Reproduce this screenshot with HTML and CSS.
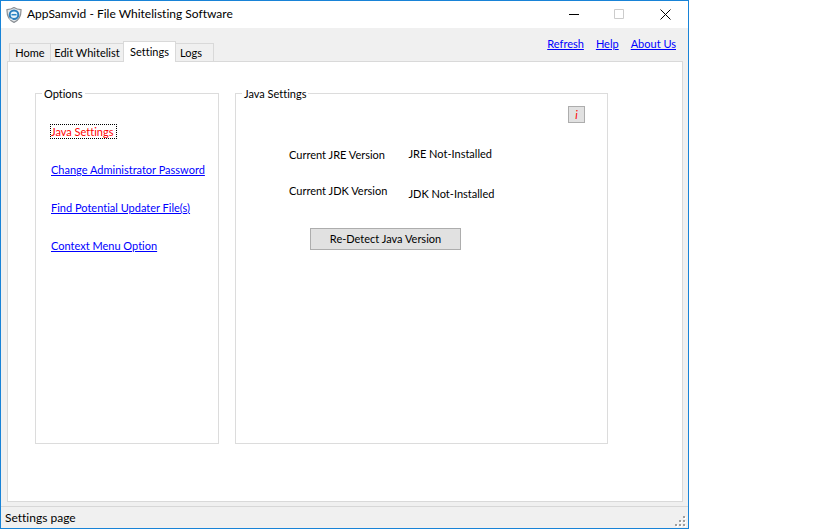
FILE: index.html
```html
<!DOCTYPE html>
<html lang="en">
<head>
<meta charset="utf-8">
<title>AppSamvid - File Whitelisting Software</title>
<link rel="stylesheet" href="styles.css">
</head>
<body>
<div class="window">
  <header class="titlebar">
    <svg class="logo" viewBox="0 0 16 16" aria-hidden="true">
      <path d="M8 .6 C6 2 3.5 2.6 1 2.6 C.8 8 2 12.800 8 15.400 C14 12.800 15.200 8 15 2.600 C12.500 2.600 10 2 8 .6Z" fill="#e4e8eb" stroke="#8b9095" stroke-width="1.200"/>
      <circle cx="8" cy="7.700" r="4.300" fill="#e9f5fb" stroke="#2a7fbd" stroke-width="2"/>
      <path d="M5.500 7.700h5" stroke="#2585c7" stroke-width="1.500"/>
      <path d="M3.500 12l3 .3M12.500 3.500l1 1" stroke="#fff" stroke-width="1"/>
    </svg>
    <h1 class="title">AppSamvid - File Whitelisting Software</h1>
    <div class="controls">
      <button class="control" type="button" aria-label="Minimize"><svg viewBox="0 0 11 11"><path d="M1 5.500h10" stroke="#000"/></svg></button>
      <button class="control" type="button" aria-label="Maximize" disabled><svg viewBox="0 0 11 11"><path d="M.5 .5h9v9h-9z" fill="none" stroke="#ccc"/></svg></button>
      <button class="control" type="button" aria-label="Close"><svg viewBox="0 0 11 11"><path d="M.5 .5l10 10M10.500 .5l-10 10" stroke="#000"/></svg></button>
    </div>
  </header>
  <div class="toolbar">
    <div class="tabs" role="tablist">
      <button class="tab" type="button" role="tab">Home</button>
      <button class="tab" type="button" role="tab">Edit Whitelist</button>
      <button class="tab active" type="button" role="tab" aria-selected="true">Settings</button>
      <button class="tab last" type="button" role="tab">Logs</button>
    </div>
    <nav class="links">
      <a href="#refresh">Refresh</a>
      <a href="#help">Help</a>
      <a href="#about">About Us</a>
    </nav>
  </div>
  <main class="page">
    <fieldset class="group options">
      <legend>Options</legend>
      <a class="current" href="#java">Java Settings</a>
      <a href="#password">Change Administrator Password</a>
      <a href="#updater">Find Potential Updater File(s)</a>
      <a href="#context">Context Menu Option</a>
    </fieldset>
    <fieldset class="group java">
      <legend>Java Settings</legend>
      <button class="info" type="button">i</button>
      <div class="versions">
        <div class="names">
          <span>Current JRE Version</span>
          <span>Current JDK Version</span>
        </div>
        <div class="values">
          <span>JRE Not-Installed</span>
          <span>JDK Not-Installed</span>
        </div>
      </div>
      <button class="detect" type="button">Re-Detect Java Version</button>
    </fieldset>
  </main>
  <footer class="status">
    <span>Settings page</span>
    <svg class="grip" viewBox="0 0 12 12" aria-hidden="true">
      <path d="M9 1h2v2h-2zM5 5h2v2h-2zM9 5h2v2h-2zM1 9h2v2h-2zM5 9h2v2h-2zM9 9h2v2h-2z" fill="#fff"/>
      <path d="M8 0h2v2h-2zM4 4h2v2h-2zM8 4h2v2h-2zM0 8h2v2h-2zM4 8h2v2h-2zM8 8h2v2h-2z" fill="#9e9e9e"/>
    </svg>
  </footer>
</div>
</body>
</html>
```
FILE: styles.css
```css
* { box-sizing: border-box; }

body {
  margin: 0;
  padding-right: 130px;
  background: #fff;
  color: #000;
  font: 11px/13px Lato, Arial, sans-serif;
  font-variant-ligatures: none;
}

button {
  margin: 0;
  padding: 0;
  color: inherit;
  font: inherit;
  font-variant-ligatures: none;
}

a { color: #00f; text-underline-offset: 1px; }

.window {
  display: flex;
  flex-direction: column;
  min-height: 100vh;
  border: 1px solid #1883d7;
  background: #f0f0f0;
}

.titlebar {
  display: flex;
  align-items: center;
  height: 27px;
  padding-left: 5px;
  background: #fff;
}

.logo { width: 16px; height: 16px; }

.title {
  margin: 0 0 0 5px;
  padding-bottom: 2px;
  font-size: 12px;
  font-weight: 400;
  line-height: 16px;
}

.controls { display: flex; margin-left: auto; }

.control {
  display: grid;
  place-items: center;
  width: 46px;
  height: 27px;
  border: 0;
  background: none;
}

.control svg { width: 11px; height: 11px; }

.toolbar {
  display: flex;
  justify-content: space-between;
  height: 33px;
  padding: 0 12px 0 8px;
}

.tabs {
  display: grid;
  grid-template-columns: 41px 73px 53px 38px;
  align-items: end;
  z-index: 1;
}

.tab {
  height: 18px;
  border: 1px solid #d9d9d9;
  border-width: 1px 0 0 1px;
  background: #f0f0f0;
}

.tab.active {
  height: 21px;
  margin-bottom: -1px;
  padding-bottom: 2px;
  border-width: 1px 1px 0;
  background: #fff;
}

.tab.last {
  padding-left: 4px;
  border-width: 1px 1px 0 0;
  text-align: left;
}

.links { display: flex; gap: 12px; padding-top: 9px; }

.page {
  display: flex;
  flex: 1;
  gap: 16px;
  margin: 0 5px 4px 6px;
  padding: 25px 74px 57px 27px;
  border: 1px solid #d9d9d9;
  background: #fff;
}

.group {
  display: flex;
  flex-direction: column;
  min-width: 0;
  margin: 0;
  padding: 0;
  border: 1px solid #dcdcdc;
}

.group legend { margin-left: 6px; padding: 0 2px; }

.options {
  flex: 0 0 184px;
  align-items: flex-start;
  gap: 25px;
  padding: 25px 0 0 15px;
}

.options legend { margin-left: -9px; }

.current {
  padding-right: 3px;
  color: #f00;
  outline: 1px dotted #000;
  text-decoration: none;
}

.java { flex: 1; }

.info {
  align-self: flex-end;
  width: 17px;
  height: 17px;
  margin: 6px 22px 0 0;
  border: 1px solid #adadad;
  background: #e1e1e1;
  color: #f00;
  font-style: italic;
}

.versions {
  display: flex;
  gap: 21px;
  margin: 24px 0 0 53px;
}

.names, .values { display: flex; flex-direction: column; }
.names { gap: 23px; padding-top: 1px; }
.values { gap: 27px; }

.detect {
  width: 151px;
  height: 22px;
  margin: 28px 0 0 74px;
  padding-bottom: 2px;
  border: 1px solid #adadad;
  background: #e1e1e1;
}

.status {
  display: flex;
  align-items: center;
  justify-content: space-between;
  height: 22px;
  padding: 0 1px 0 4px;
  border-top: 1px solid #d7d7d7;
  font-size: 12px;
  line-height: 16px;
}

.grip { align-self: flex-end; width: 12px; height: 12px; }
```
